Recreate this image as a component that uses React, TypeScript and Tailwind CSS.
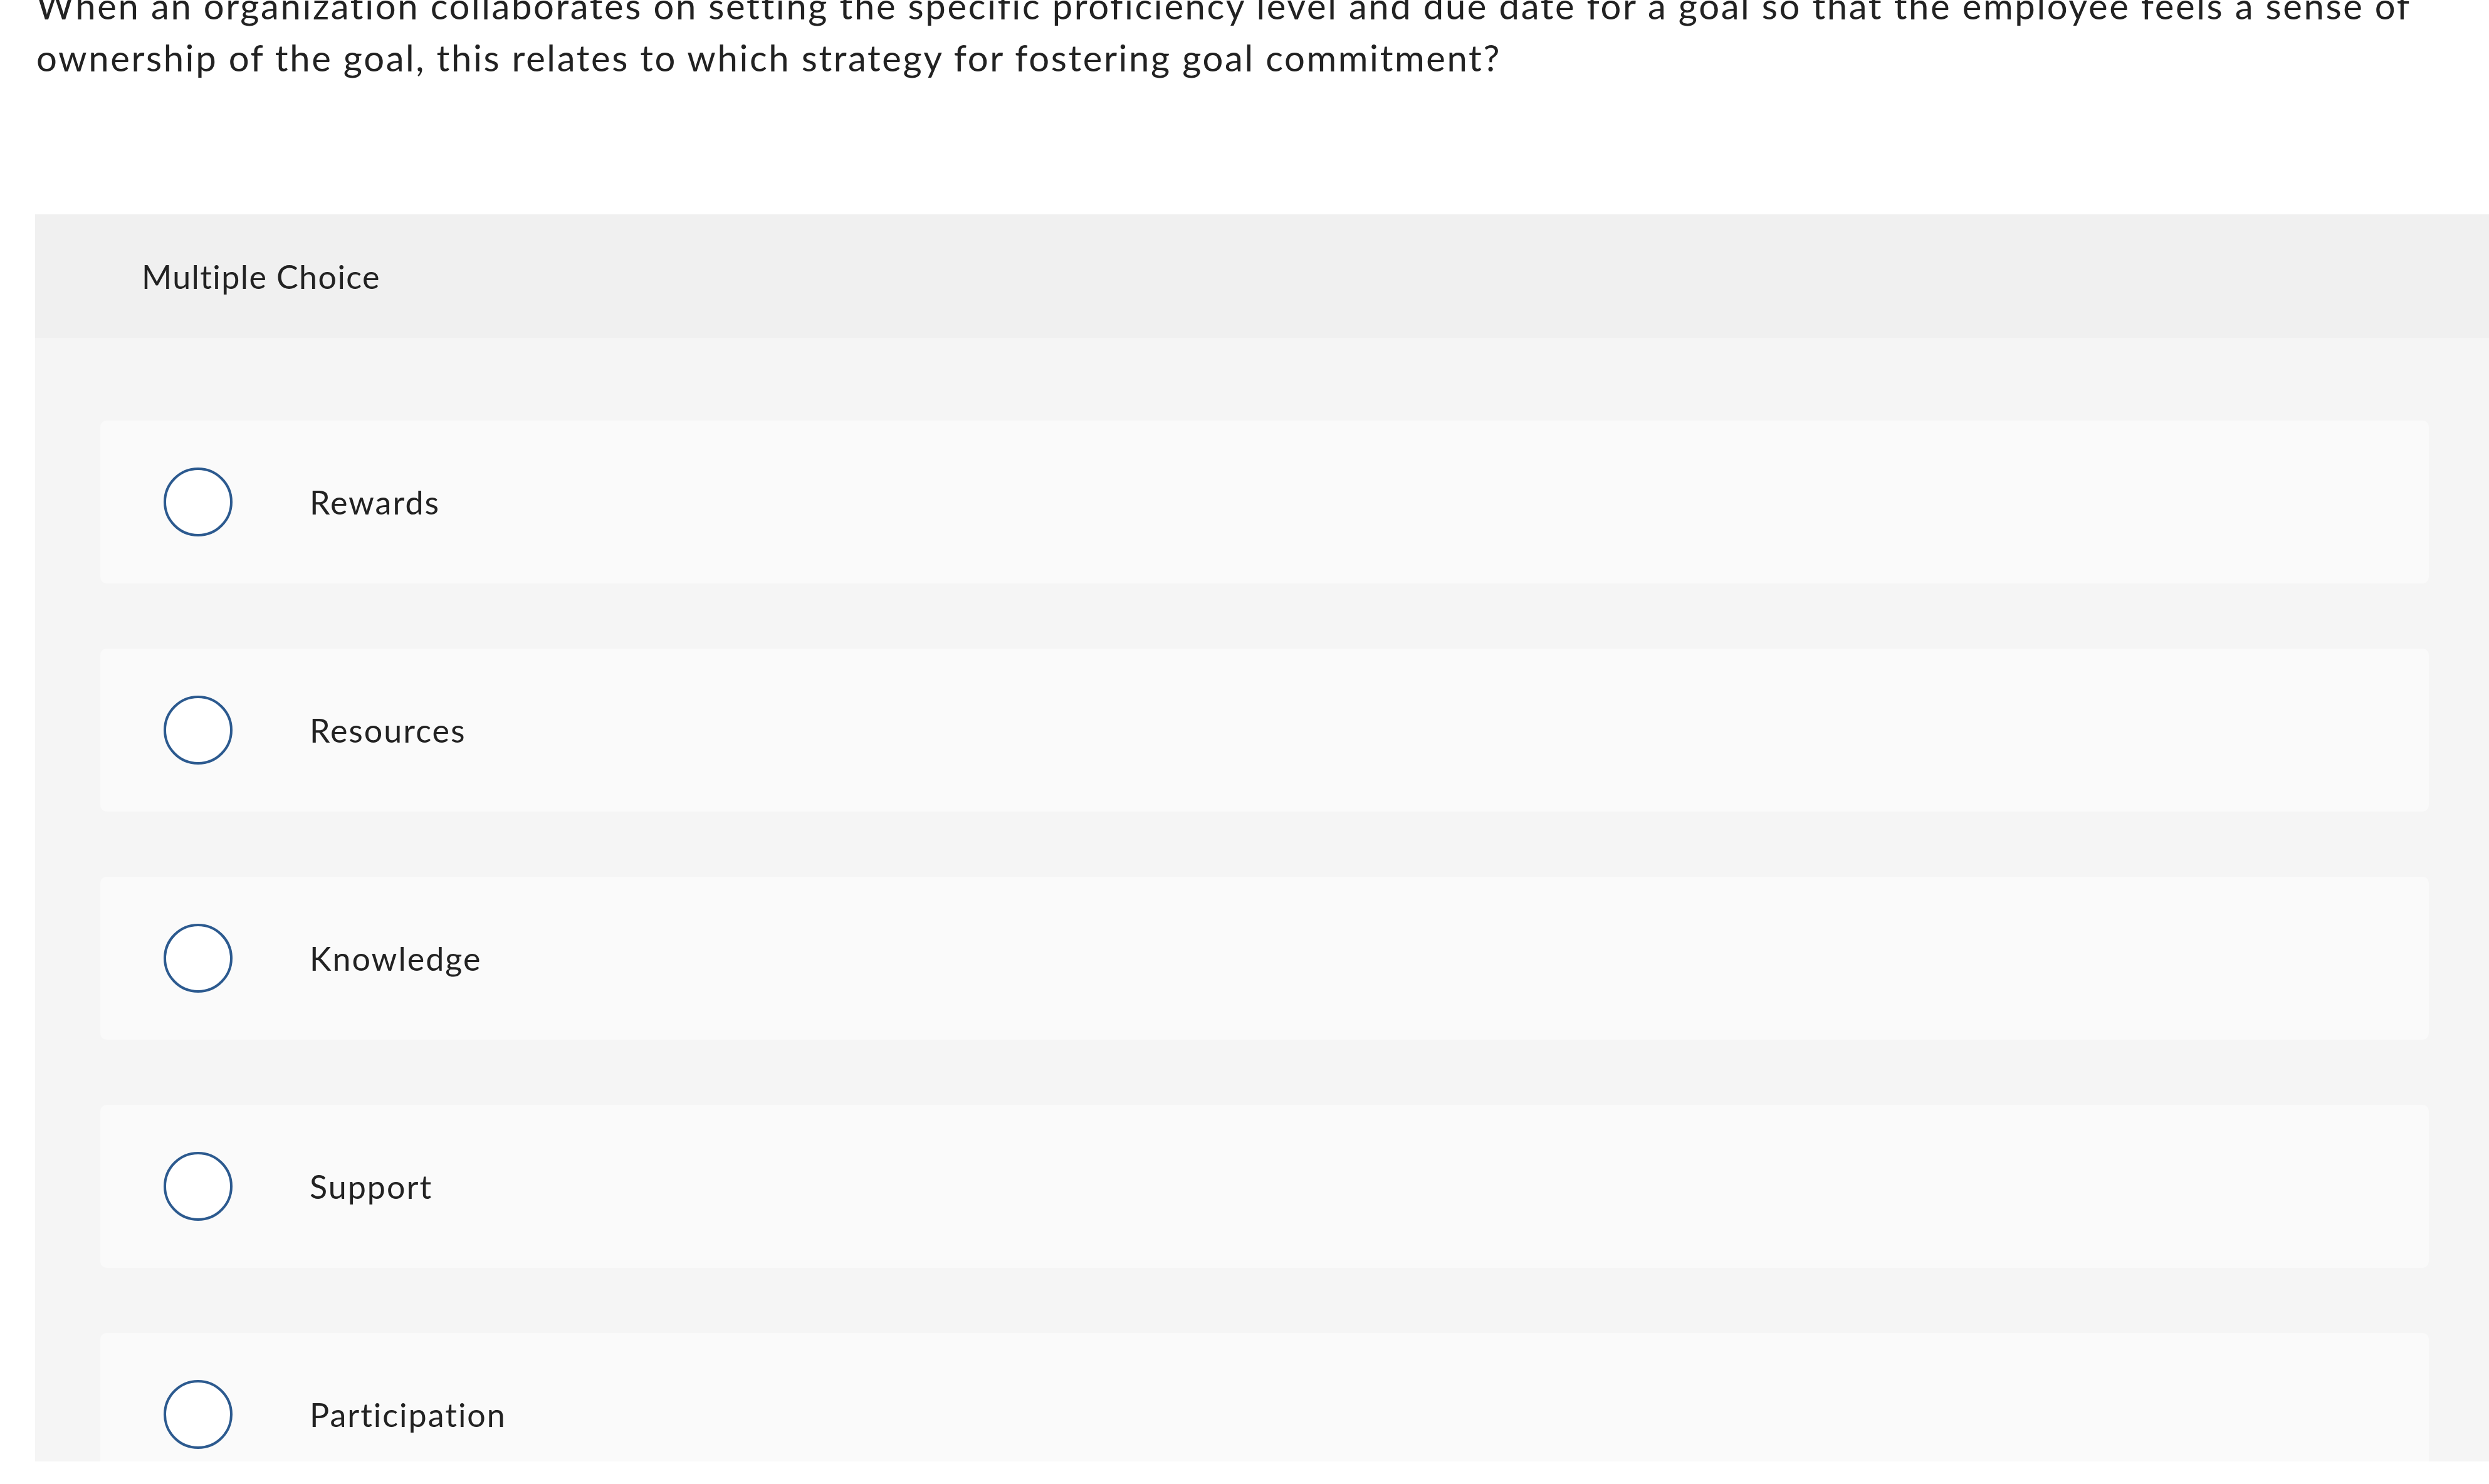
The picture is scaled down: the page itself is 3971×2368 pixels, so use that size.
import { useState } from "react";

const choices = ["Rewards", "Resources", "Knowledge", "Support", "Participation"];

export default function App() {
  const [picked, setPicked] = useState<string | null>(null);

  return (
    <div className="w-[3971px] h-[2368px] overflow-hidden bg-white text-[#222222] font-['Lato',_'Open_Sans',_sans-serif]">
      <p className="mt-[-33px] pl-[58px] w-[4100px] text-[58px] leading-[83px] tracking-[2.6px]">
        When an organization collaborates on setting the specific proficiency level and due date for a goal so that the
        employee feels a sense of
        <br />
        ownership of the goal, this relates to which strategy for fostering goal commitment?
      </p>

      <div className="mt-[209px] ml-[56px] w-[3923px] h-[1990px] overflow-hidden bg-[#f5f5f5]">
        <div className="h-[197px] flex items-center pl-[170px] bg-[#f0f0f0] text-[52px] tracking-[1.4px]">
          Multiple Choice
        </div>

        <div className="px-[104px] pt-[132px] flex flex-col gap-[104px]">
          {choices.map((c) => (
            <button
              key={c}
              onClick={() => setPicked(c)}
              className="h-[260px] shrink-0 flex items-center pl-[101px] rounded-[10px] bg-[#fafafa] text-left"
            >
              <span className="w-[110px] h-[110px] rounded-full border-[4px] border-[#2c5a8f] bg-white flex items-center justify-center shrink-0">
                {picked === c && <span className="w-[60px] h-[60px] rounded-full bg-[#2c5a8f]" />}
              </span>
              <span className="ml-[123px] text-[52px] tracking-[2px]">{c}</span>
            </button>
          ))}
        </div>
      </div>
    </div>
  );
}
